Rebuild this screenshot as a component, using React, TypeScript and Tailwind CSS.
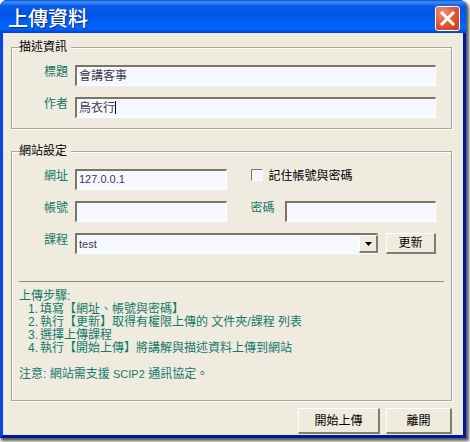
import React, { useState } from "react";

const fieldClass =
  "h-[21px] min-w-0 rounded-none border-t-2 border-l-2 border-r border-b border-t-[#7c7468] border-l-[#7c7468] border-r-white border-b-white bg-[#f5f8ff] px-0.5 text-[#3c3c44] outline-none";

const buttonClass =
  "border-t border-l border-r-2 border-b-2 border-t-white border-l-white border-r-[#827c70] border-b-[#827c70] bg-[#efebde] text-black";

const groupClass =
  "min-w-0 border border-[#aaa597] px-[7px] shadow-[1px_1px_0_#fff,inset_1px_1px_0_#fff]";

const labelClass = "w-[56px] shrink-0 pl-[25px] leading-[14px] whitespace-nowrap text-[#15796b]";

const steps = [
  "填寫【網址、帳號與密碼】",
  "執行【更新】取得有權限上傳的 文件夾/課程 列表",
  "選擇上傳課程",
  "執行【開始上傳】將講解與描述資料上傳到網站",
];

const TitleBar = () => (
  <header className="flex h-[33px] items-center justify-between rounded-t-[7px] bg-[linear-gradient(180deg,#0a50c8_0px,#3c90fb_2px,#0a5ae6_6px,#0254e4_14px,#0261fb_24px,#0264ff_29px,#0242bc_33px)] pt-1 pr-[6px] pl-2">
    <h1 className="text-[20px] leading-[26px] font-medium text-white [text-shadow:1px_1px_1px_#0a2a80]">
      上傳資料
    </h1>
    <button
      type="button"
      aria-label="關閉"
      className="flex size-[25px] items-center justify-center rounded-[3px] border border-white bg-[radial-gradient(circle_at_30%_25%,#f09078,#e0532f_55%,#c93c12)]"
    >
      <svg viewBox="0 0 23 23" className="size-[23px]" fill="none" stroke="#fff" strokeWidth="3">
        <path d="M5 5 L18 18 M18 5 L5 18" />
      </svg>
    </button>
  </header>
);

export default function App() {
  const [title, setTitle] = useState("會講客事");
  const [author, setAuthor] = useState("烏衣行");
  const [host, setHost] = useState("127.0.0.1");
  const [remember, setRemember] = useState(false);

  return (
    <div className="bg-white pr-1 pb-1 font-['Liberation_Sans','Noto_Sans_CJK_TC',sans-serif] text-[12px] leading-[14px]">
      <main className="rounded-t-[7px] bg-[#0831d9] shadow-[2px_2px_3px_1px_rgba(0,0,0,0.65)]">
        <TitleBar />
        <div className="border-r-[3px] border-b-[3px] border-l-[3px] border-r-[#001a94] border-b-[#001a94] border-l-[#0b45dd]">
          <form
            className="border-x border-b border-[#dcebfb] bg-[#efebde] pt-[7px] pr-[10px] pl-[7px]"
            onSubmit={(e) => e.preventDefault()}
          >
            <fieldset className={`${groupClass} pb-[10px]`}>
              <legend className="bg-[#efebde] pr-1 text-black">描述資訊</legend>
              <div className="flex flex-col gap-[11px] pt-[11px] pr-2">
                <div className="flex">
                  <label htmlFor="title" className={labelClass}>標題</label>
                  <input
                    id="title"
                    value={title}
                    onChange={(e) => setTitle(e.target.value)}
                    className={`${fieldClass} flex-1 pb-[3px]`}
                  />
                </div>
                <div className="flex">
                  <label htmlFor="author" className={labelClass}>作者</label>
                  <div className="relative flex flex-1">
                    <input
                      id="author"
                      value={author}
                      onChange={(e) => setAuthor(e.target.value)}
                      className={`${fieldClass} flex-1 pb-[3px]`}
                    />
                    {/* text caret */}
                    <span className="absolute top-1 left-[40px] h-[13px] w-px bg-black" />
                  </div>
                </div>
              </div>
            </fieldset>

            <fieldset className={`${groupClass} mt-[15px] pb-[19px]`}>
              <legend className="bg-[#efebde] pr-1 text-black">網站設定</legend>
              <div className="flex flex-col gap-[11px] pt-[11px] pr-2">
                <div className="grid grid-cols-[56px_minmax(0,1fr)_58px_minmax(0,1fr)] gap-y-[11px]">
                  <label htmlFor="host" className={labelClass}>網址</label>
                  <input
                    id="host"
                    value={host}
                    onChange={(e) => setHost(e.target.value)}
                    className={`${fieldClass} pb-[3px] text-[11px]`}
                  />
                  <div className="col-span-2 flex items-start gap-[6px] pl-6">
                    <input
                      id="remember"
                      type="checkbox"
                      checked={remember}
                      onChange={(e) => setRemember(e.target.checked)}
                      className="size-3 shrink-0 appearance-none border border-t-[#7c7468] border-l-[#7c7468] border-r-white border-b-white bg-[#f5f5fb] checked:bg-[#15796b]"
                    />
                    <label htmlFor="remember" className="whitespace-nowrap text-black">
                      記住帳號與密碼
                    </label>
                  </div>
                  <label htmlFor="account" className={labelClass}>帳號</label>
                  <input id="account" className={fieldClass} />
                  <label htmlFor="password" className="pl-6 whitespace-nowrap text-[#15796b]">
                    密碼
                  </label>
                  <input id="password" type="password" className={fieldClass} />
                </div>
                <div className="flex">
                  <label htmlFor="course" className={labelClass}>課程</label>
                  <div className="relative flex flex-1">
                    <select
                      id="course"
                      defaultValue="test"
                      className={`${fieldClass} flex-1 appearance-none text-[11px]`}
                    >
                      <option value="test">test</option>
                    </select>
                    <span className="pointer-events-none absolute top-0.5 right-0 flex h-[18px] w-[19px] items-center justify-center border-t border-l border-r-2 border-b-2 border-t-white border-l-white border-r-[#827c70] border-b-[#827c70] bg-[#efebde]">
                      <svg viewBox="0 0 7 4" className="h-1 w-[7px]" fill="#000">
                        <path d="M0 0h7L3.5 4z" />
                      </svg>
                    </span>
                  </div>
                  <button type="button" className={`${buttonClass} ml-2 w-[50px]`}>更新</button>
                </div>
              </div>

              <hr className="mt-[27px] border-[#8f8b80]" />
              <div className="mt-2 leading-[13px] text-[#15796b]">
                <p>上傳步驟:</p>
                <ol>
                  {steps.map((step, idx) => (
                    <li key={step} className="flex pl-[9px]">
                      <span className="w-3 shrink-0">{idx + 1}.</span>
                      <span>{step}</span>
                    </li>
                  ))}
                </ol>
                <p className="mt-[13px]">
                  注意: 網站需支援 <span className="text-[11px]">SCIP2</span> 通訊協定。
                </p>
              </div>
            </fieldset>

            <div className="mt-[7px] flex justify-end gap-[6px]">
              <button type="submit" className={`${buttonClass} h-[26px] w-[82px]`}>開始上傳</button>
              <button type="button" className={`${buttonClass} h-[26px] w-[66px]`}>離開</button>
            </div>
          </form>
        </div>
      </main>
    </div>
  );
}
